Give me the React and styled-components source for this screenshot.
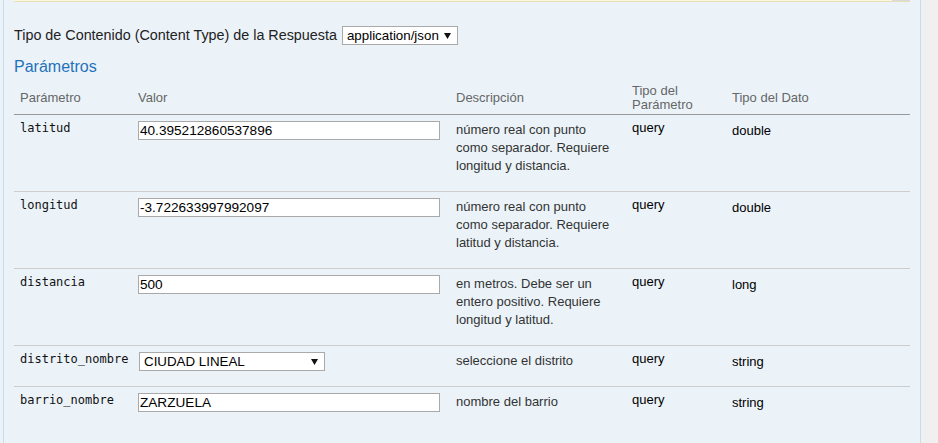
import React from 'react'
import styled, { createGlobalStyle } from 'styled-components'

const GlobalStyle = createGlobalStyle`
    html, body {
        margin: 0;
        padding: 0;
    }
    body {
        font-family: "Liberation Sans", Arial, sans-serif;
        background: #f0f0f0;
    }
`

const params = [
    {
        name: 'latitud',
        value: '40.395212860537896',
        desc: 'número real con punto como separador. Requiere longitud y distancia.',
        paramType: 'query',
        dataType: 'double'
    },
    {
        name: 'longitud',
        value: '-3.722633997992097',
        desc: 'número real con punto como separador. Requiere latitud y distancia.',
        paramType: 'query',
        dataType: 'double'
    },
    {
        name: 'distancia',
        value: '500',
        desc: 'en metros. Debe ser un entero positivo. Requiere longitud y latitud.',
        paramType: 'query',
        dataType: 'long'
    },
    {
        name: 'distrito_nombre',
        value: 'CIUDAD LINEAL',
        options: ['CIUDAD LINEAL', 'CENTRO', 'ARGANZUELA', 'RETIRO', 'SALAMANCA'],
        desc: 'seleccione el distrito',
        paramType: 'query',
        dataType: 'string'
    },
    {
        name: 'barrio_nombre',
        value: 'ZARZUELA',
        desc: 'nombre del barrio',
        paramType: 'query',
        dataType: 'string'
    }
]

export default function App() {
    return (
        <Frame>
            <GlobalStyle />
            <Panel>
                <ResponseBox>
                    <ResponseScroll />
                </ResponseBox>
                <ContentTypeRow>
                    <span>Tipo de Contenido (Content Type) de la Respuesta</span>
                    <Dropdown width={116} value="application/json" options={['application/json']} />
                </ContentTypeRow>
                <Heading>Parámetros</Heading>
                <ParamTable>
                    <colgroup>
                        <col style={{ width: 118 }} />
                        <col style={{ width: 318 }} />
                        <col style={{ width: 176 }} />
                        <col style={{ width: 100 }} />
                        <col style={{ width: 184 }} />
                    </colgroup>
                    <thead>
                        <tr>
                            <Th>Parámetro</Th>
                            <Th>Valor</Th>
                            <Th>Descripción</Th>
                            <Th>Tipo del<br />Parámetro</Th>
                            <Th>Tipo del Dato</Th>
                        </tr>
                    </thead>
                    <tbody>
                        {params.map(p => (
                            <ParamRow key={p.name} item={p} />
                        ))}
                    </tbody>
                </ParamTable>
            </Panel>
        </Frame>
    )
}

function ParamRow({ item }) {
    return (
        <Tr>
            <Td><ParamName>{item.name}</ParamName></Td>
            <Td>
                {item.options
                    ? <Dropdown width={186} value={item.value} options={item.options} offset />
                    : <ValueInput defaultValue={item.value} />}
            </Td>
            <Td><Desc>{item.desc}</Desc></Td>
            <Td><TypeText $lh={14}>{item.paramType}</TypeText></Td>
            <Td><TypeText $lh={18} $top={1}>{item.dataType}</TypeText></Td>
        </Tr>
    )
}

function Dropdown({ width, value, options, offset }) {
    return (
        <SelectWrap $w={width} $offset={offset}>
            <SelectBox defaultValue={value}>
                {options.map(o => <option key={o} value={o}>{o}</option>)}
            </SelectBox>
            <Arrow width="7" height="6" viewBox="0 0 7 6">
                <polygon points="0,0 7,0 3.5,6" fill="#111" />
            </Arrow>
        </SelectWrap>
    )
}

const Frame = styled.div`
    display: flex;
    min-height: 443px;
    background: linear-gradient(to right, #ebf3f9 3px, #f0f0f0 3px);
`
const Panel = styled.div`
    margin-left: 3px;
    width: 896px;
    padding: 0 10px;
    background: #ebf3f9;
    border-left: 1px solid #c6dcef;
    border-right: 1px solid #c6dcef;
`
const ResponseBox = styled.div`
    display: flex;
    justify-content: flex-end;
    height: 1px;
    background: #fcf6db;
    border-bottom: 1px solid #e6dfb9;
`
const ResponseScroll = styled.div`
    width: 18px;
    background: #d9d9d9;
`
const ContentTypeRow = styled.div`
    display: flex;
    align-items: center;
    gap: 5px;
    margin-top: 24px;
    font-size: 14.35px;
    color: #222;
    height: 18px;
`
const SelectWrap = styled.div`
    position: relative;
    display: inline-block;
    width: ${p => p.$w}px;
    margin-left: ${p => (p.$offset ? 1 : 0)}px;
`
const SelectBox = styled.select`
    appearance: none;
    -webkit-appearance: none;
    display: block;
    width: 100%;
    height: 19px;
    box-sizing: border-box;
    margin: 0;
    padding: 0 16px 0 4px;
    border: 1px solid #a9a9a9;
    border-radius: 0;
    background: #fff;
    font-family: "Liberation Sans", Arial, sans-serif;
    font-size: 13.33px;
    color: #000;
    outline: none;
`
const Arrow = styled.svg`
    position: absolute;
    right: 7px;
    top: 7px;
    pointer-events: none;
`
const Heading = styled.h4`
    margin: 14px 0 5px;
    font-size: 16px;
    line-height: 18px;
    font-weight: normal;
    color: #1f72bb;
`
const ParamTable = styled.table`
    width: 896px;
    border-collapse: collapse;
    table-layout: fixed;
`
const Th = styled.th`
    text-align: left;
    font-weight: normal;
    font-size: 13px;
    line-height: 14px;
    color: #666;
    padding: 3px 6px 2px;
    vertical-align: middle;
    border-bottom: 1px solid #999;
`
const Tr = styled.tr`
    border-bottom: 1px solid #cdcdcd;
    &:last-child {
        border-bottom: none;
    }
`
const Td = styled.td`
    vertical-align: top;
    padding: 6px 6px 6px;
`
const ParamName = styled.div`
    font-family: "DejaVu Sans Mono", "Liberation Mono", monospace;
    font-size: 12px;
    line-height: 14px;
    color: #111;
`
const ValueInput = styled.input`
    display: block;
    width: 302px;
    height: 19px;
    box-sizing: border-box;
    margin: 0;
    padding: 0 1px;
    border: 1px solid #a9a9a9;
    background: #fff;
    font-family: "Liberation Sans", Arial, sans-serif;
    font-size: 13.6px;
    color: #000;
    outline: none;
`
const Desc = styled.p`
    margin: 0 0 10px;
    font-size: 13px;
    line-height: 18px;
    color: #333;
`
const TypeText = styled.div`
    font-size: 13px;
    line-height: ${p => p.$lh}px;
    padding-top: ${p => p.$top || 0}px;
    color: #000;
`
